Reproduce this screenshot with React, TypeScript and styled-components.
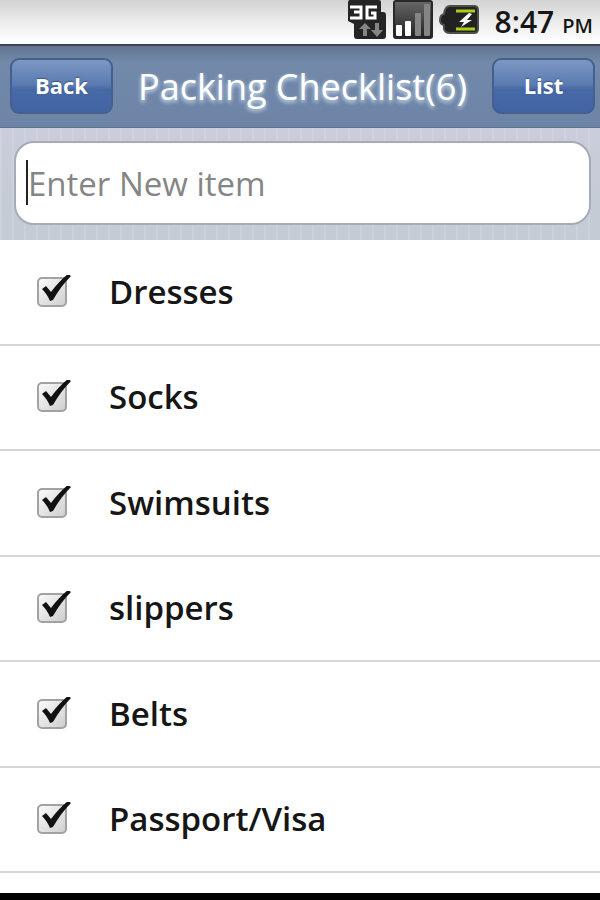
import React, { useState } from 'react';
import styled, { createGlobalStyle } from 'styled-components';

const GlobalStyle = createGlobalStyle`
  * { box-sizing: border-box; }
  body {
    margin: 0;
    background: #000;
    color: #161616;
    font-family: "Open Sans", "Noto Sans", sans-serif;
  }
`;

const Screen = styled.div`
  display: flex;
  flex-direction: column;
  min-height: 100vh;
  border-bottom: 7px solid #000;
  background: #fff;
`;

const StatusBar = styled.header`
  display: flex;
  align-items: flex-start;
  justify-content: flex-end;
  height: 44px;
  padding-right: 7px;
  background: linear-gradient(#d2d2d2, #ececec 50%, #fcfcfc 90%);
`;

const StatusIcons = styled.div`
  display: flex;
  align-items: center;
  gap: 6px;
  margin-right: 16px;
  svg { display: block; }
`;

const Clock = styled.time`
  display: flex;
  align-items: baseline;
  gap: 8px;
  font-size: 30px;
  font-weight: 600;
  line-height: 44px;
`;

const Meridiem = styled.span`
  font-size: 20px;
`;

const TitleBar = styled.nav`
  display: flex;
  align-items: center;
  justify-content: space-between;
  height: 84px;
  padding: 0 5px 2px 10px;
  border-top: 2px solid #3b4554;
  border-bottom: 1px solid #5b718c;
  background: linear-gradient(#62758f, #7289aa 20%, #7087a9 50%, #6d84a6);
`;

const Title = styled.h1`
  margin: 0;
  padding-top: 2px;
  font-size: 36px;
  font-weight: 500;
  line-height: 48px;
  color: #fff;
  white-space: nowrap;
  text-shadow: 0 2px 4px rgba(225, 243, 255, 0.9);
`;

const BarButton = styled.button`
  width: 103px;
  height: 56px;
  padding: 0 0 2px;
  border: 2px solid #45608f;
  border-radius: 9px;
  background: linear-gradient(#7c97c3, #5a7ab0 48%, #4769a6 56%, #4364a3);
  color: #fff;
  font: 700 22px/30px "Open Sans", sans-serif;
  text-shadow: 0 -1px 1px rgba(30, 50, 90, 0.5);
`;

const EntryForm = styled.form`
  height: 112px;
  padding: 13px 9px 15px 14px;
  background:
    repeating-linear-gradient(90deg, rgba(255, 255, 255, 0.12) 0 2px, transparent 2px 12px),
    linear-gradient(#cacddb, #c3cbd3);
`;

const EntryField = styled.div`
  position: relative;
  height: 84px;
`;

const EntryInput = styled.input`
  display: block;
  width: 100%;
  height: 100%;
  padding: 0 12px;
  border: 2px solid #a6abb8;
  border-radius: 20px;
  outline: none;
  background: #fff;
  color: #161616;
  font: 400 33px/46px "Open Sans", sans-serif;
  &::placeholder { color: #858585; opacity: 1; }
`;

const Caret = styled.span`
  position: absolute;
  top: 19px;
  left: 12px;
  width: 2px;
  height: 45px;
  background: #222;
`;

const Items = styled.ul`
  display: grid;
  flex: 1;
  grid-auto-rows: minmax(104px, 1fr);
  margin: 0 0 20px;
  padding: 0;
  list-style: none;
`;

const Item = styled.li`
  display: flex;
  border-bottom: 2px solid #d6d6d6;
`;

const ItemLabel = styled.label`
  display: flex;
  flex: 1;
  align-items: center;
  gap: 38px;
  padding-left: 37px;
  font-size: 33px;
  font-weight: 600;
  line-height: 44px;
`;

const TickBox = styled.span`
  position: relative;
  width: 34px;
  height: 34px;
`;

const TickInput = styled.input`
  appearance: none;
  display: block;
  width: 30px;
  height: 30px;
  margin: 2px 0 0;
  border: 2px solid #a2a2a2;
  border-radius: 5px;
  background: linear-gradient(135deg, #fafafa, #cfcfcf);
  &:not(:checked) + svg { display: none; }
`;

const TickMark = styled.svg`
  position: absolute;
  top: 0;
  left: 0;
  pointer-events: none;
`;

const NetworkIcon = () => (
  <svg width="40" height="40" viewBox="0 0 40 40" aria-hidden="true">
    <path d="M2 0H32Q34 0 34 3V12H36Q39 12 39 15V36Q39 39 36 39H10Q7 39 7 36V24L1 21V2Z" fill="#242424" />
    <path d="M3 7H14V18H3M7 12H14" fill="none" stroke="#fff" strokeWidth="3" />
    <path d="M30 7H20V18H28V13H24" fill="none" stroke="#fff" strokeWidth="3" />
    <path d="M18 23L24 29H20V36H16V29H12Z" fill="#858585" />
    <path d="M28 23H32V30H36L30 37L24 30H28Z" fill="#858585" />
  </svg>
);

const SignalIcon = () => (
  <svg width="40" height="40" viewBox="0 0 40 40" aria-hidden="true">
    <defs>
      <linearGradient id="signalFace" x1="0" y1="0" x2="0" y2="1">
        <stop offset="0" stopColor="#686868" />
        <stop offset="1" stopColor="#202020" />
      </linearGradient>
    </defs>
    <rect x="1" y="1" width="38" height="37" rx="2" fill="url(#signalFace)" stroke="#292929" strokeWidth="2" />
    <rect x="3" y="25" width="6" height="11" rx="1" fill="#fff" />
    <rect x="12" y="21" width="6" height="15" rx="1" fill="#fff" />
    <rect x="22" y="13" width="6" height="23" rx="1" fill="#858585" />
    <rect x="31" y="4" width="6" height="32" rx="1" fill="#858585" />
  </svg>
);

const BatteryIcon = () => (
  <svg width="40" height="30" viewBox="0 0 40 30" aria-hidden="true">
    <path d="M11 1H35Q39 1 39 5V24Q39 28 35 28H11Q6 28 5 24V20Q1 19 1 15Q1 10 5 9Q6 1 11 1Z" fill="#222" stroke="#4d4d4d" strokeWidth="2" />
    <path d="M17 6H36M17 24H36" stroke="#a7cf18" strokeWidth="3" />
    <path d="M30 8L20 17H25L22 22L33 15H28L33 9Z" fill="#fff" />
  </svg>
);

const Tick = () => (
  <TickMark width="34" height="34" viewBox="0 0 34 34" aria-hidden="true">
    <path d="M5 14L9 11L14 17C20 9 26 3 31 -1L34 1C27 8 21 16 16 25L13 26C11 21 8 17 5 14Z" fill="#111" />
  </TickMark>
);

const packingList = ['Dresses', 'Socks', 'Swimsuits', 'slippers', 'Belts', 'Passport/Visa'];

const ChecklistItem = ({ name }: { name: string }) => (
  <Item>
    <ItemLabel>
      <TickBox>
        <TickInput type="checkbox" defaultChecked />
        <Tick />
      </TickBox>
      {name}
    </ItemLabel>
  </Item>
);

export default function App() {
  const [entry, setEntry] = useState('');
  const [items, setItems] = useState(packingList);

  const addItem = (event: React.FormEvent) => {
    event.preventDefault();
    if (!entry.trim()) return;
    setItems([...items, entry.trim()]);
    setEntry('');
  };

  return (
    <>
      <GlobalStyle />
      <Screen>
        <StatusBar>
          <StatusIcons>
            <NetworkIcon />
            <SignalIcon />
            <BatteryIcon />
          </StatusIcons>
          <Clock>
            8:47 <Meridiem>PM</Meridiem>
          </Clock>
        </StatusBar>
        <TitleBar>
          <BarButton type="button">Back</BarButton>
          <Title>Packing Checklist({items.length})</Title>
          <BarButton type="button">List</BarButton>
        </TitleBar>
        <EntryForm onSubmit={addItem}>
          <EntryField>
            <EntryInput
              type="text"
              aria-label="New item"
              placeholder="Enter New item"
              value={entry}
              onChange={(event) => setEntry(event.target.value)}
            />
            {entry === '' && <Caret />}
          </EntryField>
        </EntryForm>
        <Items>
          {items.map((name) => (
            <ChecklistItem key={name} name={name} />
          ))}
        </Items>
      </Screen>
    </>
  );
}
